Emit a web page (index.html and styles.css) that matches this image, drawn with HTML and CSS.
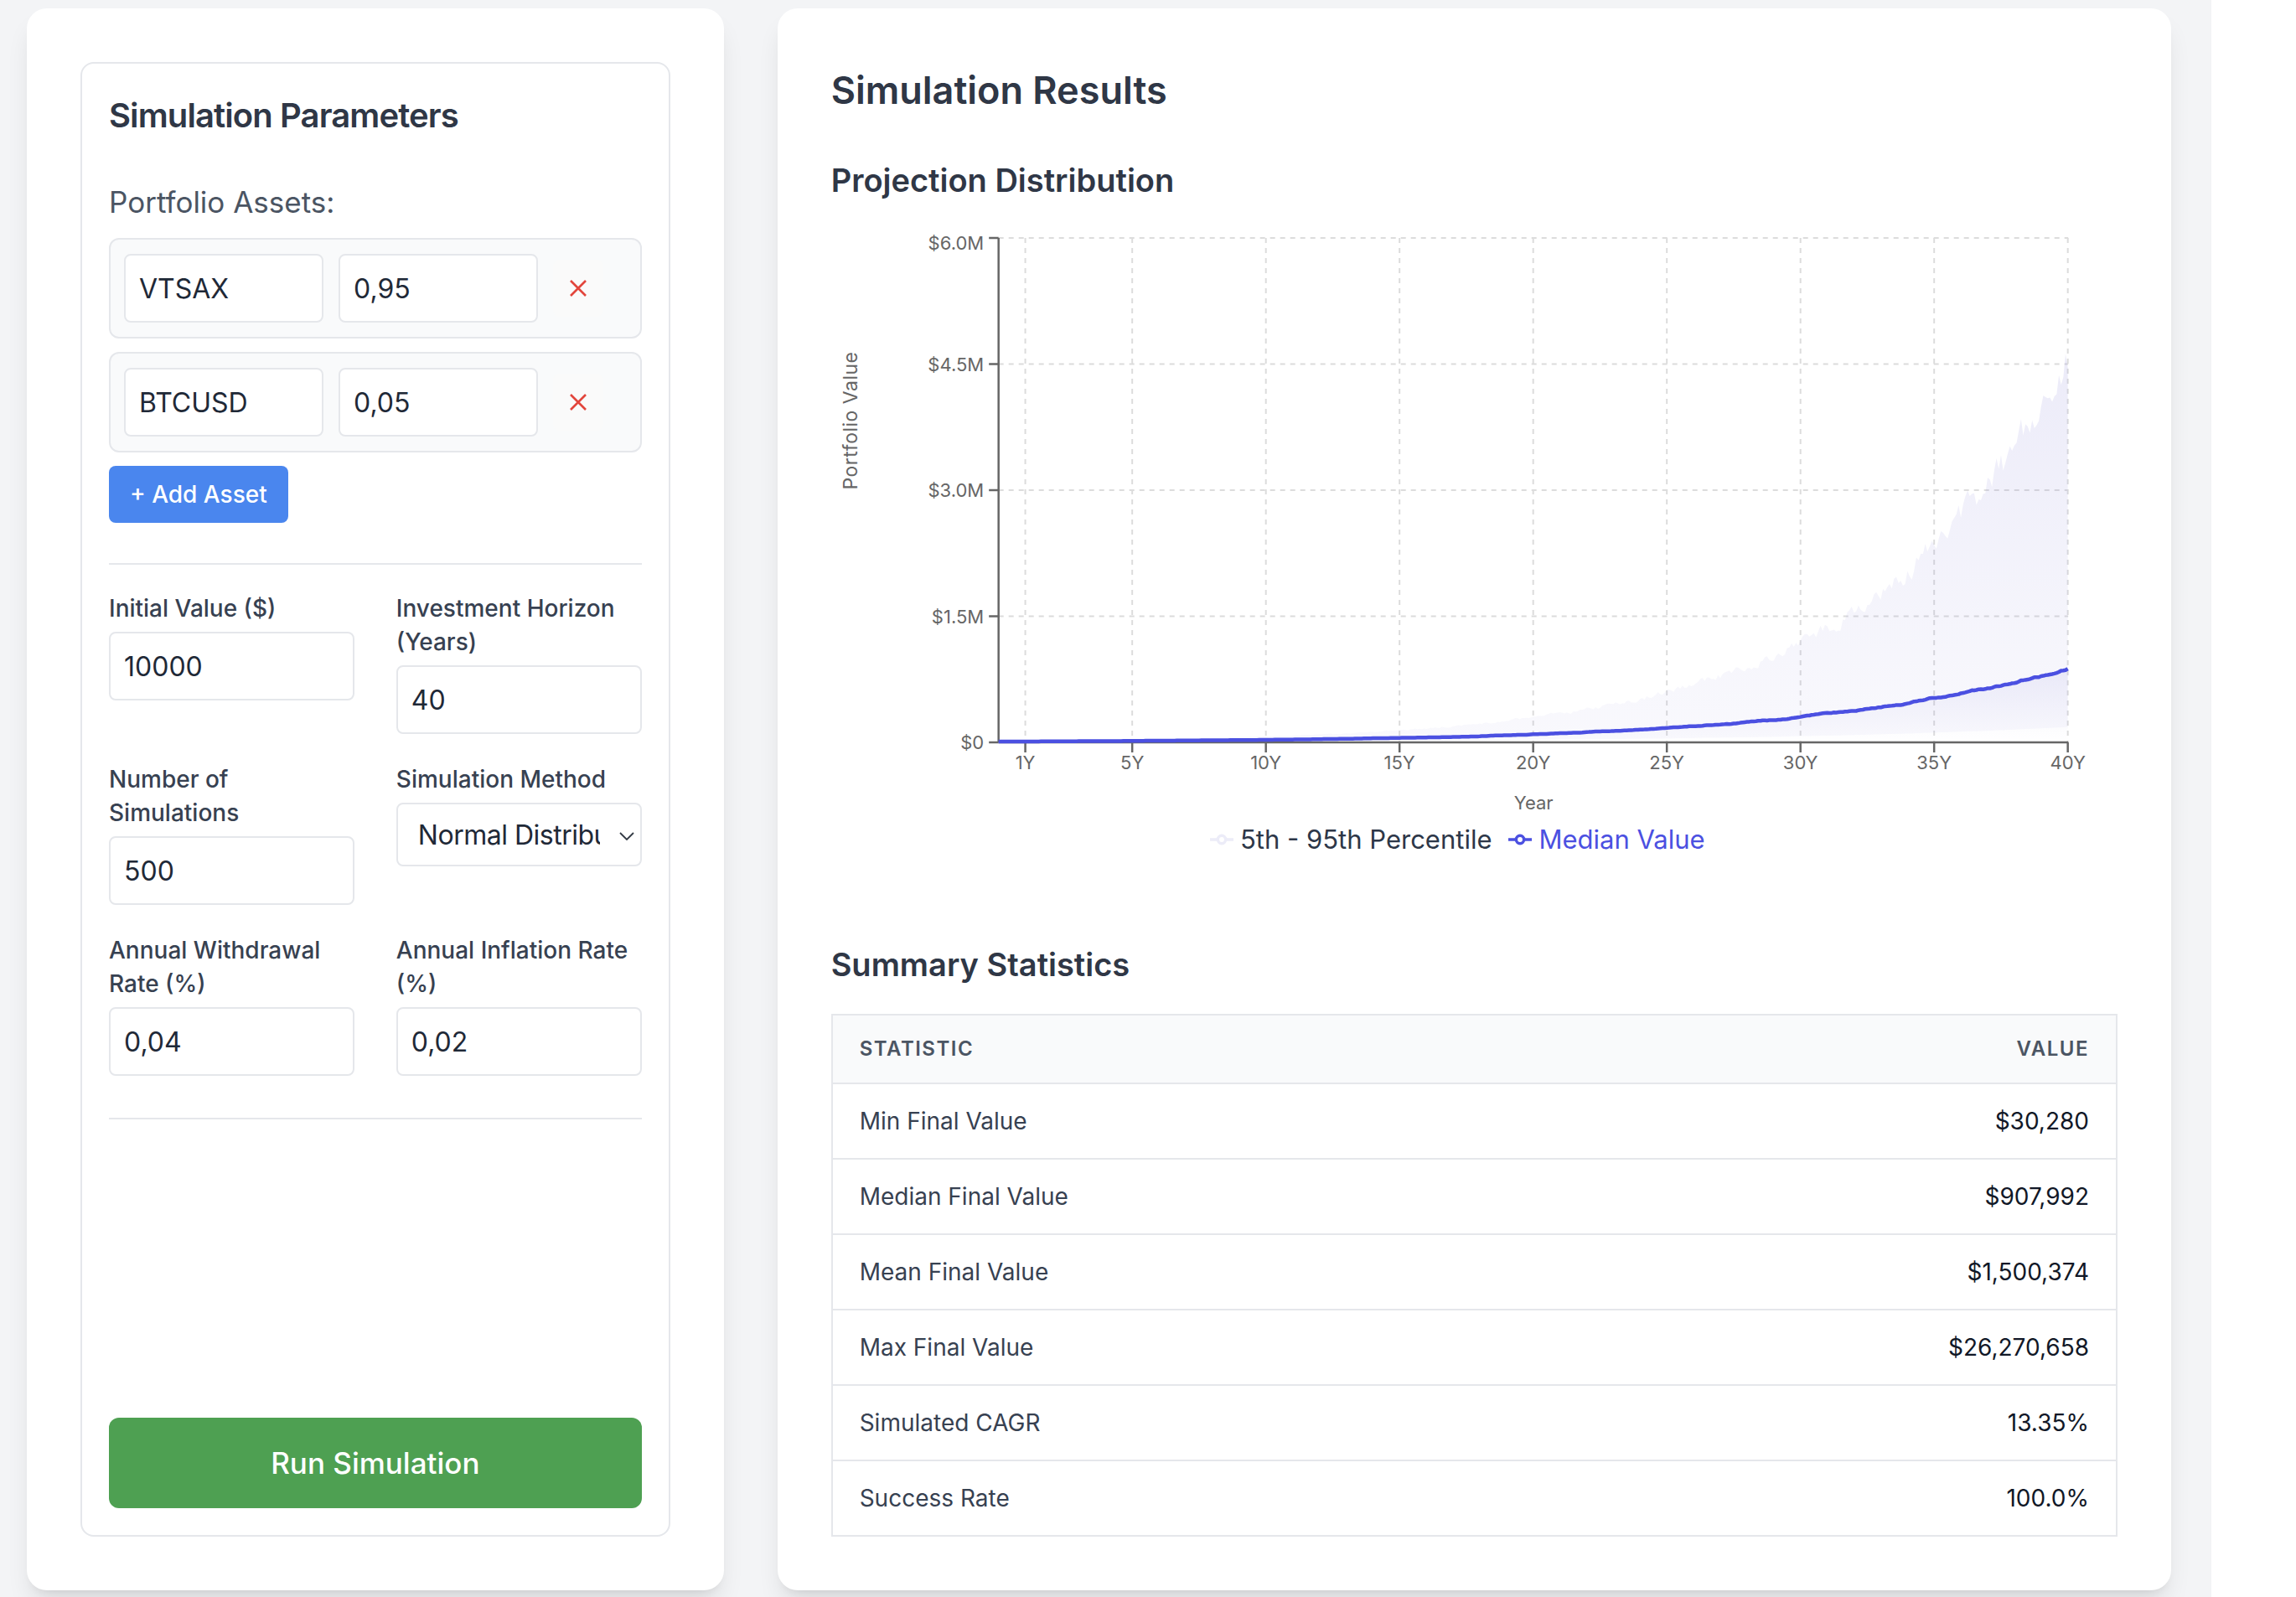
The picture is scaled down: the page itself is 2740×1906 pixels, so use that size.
FILE: index.html
```html
<!DOCTYPE html>
<html lang="en">
<head>
<meta charset="utf-8">
<title>Monte Carlo Simulation</title>
<link rel="stylesheet" href="styles.css">
</head>
<body>
<div class="page">
  <div class="layout">
    <section class="card card-left">
      <div class="params">
        <h2 class="params-title">Simulation Parameters</h2>
        <h3 class="assets-title">Portfolio Assets:</h3>
        <div class="asset-row">
          <input class="field-input asset-input" type="text" value="VTSAX">
          <input class="field-input asset-input" type="text" value="0,95">
          <button class="remove-btn" type="button" aria-label="Remove">
            <svg class="remove-icon" viewBox="0 0 22 22"><path d="M2 2L20 20M20 2L2 20"/></svg>
          </button>
        </div>
        <div class="asset-row">
          <input class="field-input asset-input" type="text" value="BTCUSD">
          <input class="field-input asset-input" type="text" value="0,05">
          <button class="remove-btn" type="button" aria-label="Remove">
            <svg class="remove-icon" viewBox="0 0 22 22"><path d="M2 2L20 20M20 2L2 20"/></svg>
          </button>
        </div>
        <button class="btn-add" type="button">+ Add Asset</button>
        <hr class="divider">
        <div class="fields">
          <div class="field">
            <label class="field-label">Initial Value ($)</label>
            <input class="field-input" type="text" value="10000">
          </div>
          <div class="field">
            <label class="field-label">Investment Horizon (Years)</label>
            <input class="field-input" type="text" value="40">
          </div>
          <div class="field">
            <label class="field-label">Number of Simulations</label>
            <input class="field-input" type="text" value="500">
          </div>
          <div class="field">
            <label class="field-label">Simulation Method</label>
            <div class="select-box">
              <span class="select-text">Normal Distribution</span>
              <svg class="select-chevron" viewBox="0 0 18 10"><path d="M1 1L9 9L17 1"/></svg>
            </div>
          </div>
          <div class="field">
            <label class="field-label">Annual Withdrawal Rate (%)</label>
            <input class="field-input" type="text" value="0,04">
          </div>
          <div class="field">
            <label class="field-label">Annual Inflation Rate (%)</label>
            <input class="field-input" type="text" value="0,02">
          </div>
        </div>
        <hr class="divider divider-bottom">
        <button class="btn-run" type="button">Run Simulation</button>
      </div>
    </section>

    <section class="card card-right">
      <h2 class="results-title">Simulation Results</h2>
      <h3 class="section-title">Projection Distribution</h3>
      <div class="chart">
        <svg class="chart-svg" viewBox="0 0 1535 718" width="1535" height="718">
          <defs>
            <linearGradient id="bandFill" x1="0" y1="0" x2="0" y2="1">
              <stop offset="0" stop-color="#8884d8" stop-opacity="0.16"/>
              <stop offset="1" stop-color="#8884d8" stop-opacity="0.05"/>
            </linearGradient>
            <linearGradient id="medFill" x1="0" y1="0" x2="0" y2="1">
              <stop offset="0" stop-color="#8884d8" stop-opacity="0.12"/>
              <stop offset="1" stop-color="#8884d8" stop-opacity="0"/>
            </linearGradient>
          </defs>
          <g class="grid">
            <line x1="199.5" y1="24" x2="1476" y2="24"/>
            <line x1="199.5" y1="174.5" x2="1476" y2="174.5"/>
            <line x1="199.5" y1="325" x2="1476" y2="325"/>
            <line x1="199.5" y1="475.5" x2="1476" y2="475.5"/>
            <line x1="231.4" y1="24" x2="231.4" y2="626"/>
            <line x1="359" y1="24" x2="359" y2="626"/>
            <line x1="518.5" y1="24" x2="518.5" y2="626"/>
            <line x1="678" y1="24" x2="678" y2="626"/>
            <line x1="837.5" y1="24" x2="837.5" y2="626"/>
            <line x1="997" y1="24" x2="997" y2="626"/>
            <line x1="1156.5" y1="24" x2="1156.5" y2="626"/>
            <line x1="1316" y1="24" x2="1316" y2="626"/>
            <line x1="1475.5" y1="24" x2="1475.5" y2="626"/>
          </g>
          <path id="band" class="band" d=""/>
          <path id="median-area" class="median-area" d=""/>
          <g class="axis">
            <line x1="199.5" y1="24" x2="199.5" y2="626"/>
            <line x1="199.5" y1="626" x2="1476" y2="626"/>
            <line x1="188" y1="24" x2="199.5" y2="24"/>
            <line x1="188" y1="174.5" x2="199.5" y2="174.5"/>
            <line x1="188" y1="325" x2="199.5" y2="325"/>
            <line x1="188" y1="475.5" x2="199.5" y2="475.5"/>
            <line x1="188" y1="626" x2="199.5" y2="626"/>
            <line x1="231.4" y1="626" x2="231.4" y2="638"/>
            <line x1="359" y1="626" x2="359" y2="638"/>
            <line x1="518.5" y1="626" x2="518.5" y2="638"/>
            <line x1="678" y1="626" x2="678" y2="638"/>
            <line x1="837.5" y1="626" x2="837.5" y2="638"/>
            <line x1="997" y1="626" x2="997" y2="638"/>
            <line x1="1156.5" y1="626" x2="1156.5" y2="638"/>
            <line x1="1316" y1="626" x2="1316" y2="638"/>
            <line x1="1475.5" y1="626" x2="1475.5" y2="638"/>
          </g>
          <path id="median-line" class="median-line" d=""/>
          <g class="tick-y">
            <text x="182" y="38">$6.0M</text>
            <text x="182" y="182.5">$4.5M</text>
            <text x="182" y="333">$3.0M</text>
            <text x="182" y="483.5">$1.5M</text>
            <text x="182" y="634">$0</text>
          </g>
          <g class="tick-x">
            <text x="231.4" y="658">1Y</text>
            <text x="359" y="658">5Y</text>
            <text x="518.5" y="658">10Y</text>
            <text x="678" y="658">15Y</text>
            <text x="837.5" y="658">20Y</text>
            <text x="997" y="658">25Y</text>
            <text x="1156.5" y="658">30Y</text>
            <text x="1316" y="658">35Y</text>
            <text x="1475.5" y="658">40Y</text>
          </g>
          <text class="axis-title" x="838" y="706">Year</text>
          <text class="axis-title axis-title-y" transform="translate(31 242) rotate(-90)">Portfolio Value</text>
        </svg>
        <div class="legend">
          <span class="legend-item">
            <svg class="legend-icon" viewBox="0 0 32 32"><path class="legend-band" d="M0,16h10.667A5.333,5.333,0,1,1,21.333,16H32M21.333,16A5.333,5.333,0,1,1,10.667,16"/></svg>
            <span class="legend-text">5th - 95th Percentile</span>
          </span>
          <span class="legend-item">
            <svg class="legend-icon" viewBox="0 0 32 32"><path class="legend-median" d="M0,16h10.667A5.333,5.333,0,1,1,21.333,16H32M21.333,16A5.333,5.333,0,1,1,10.667,16"/></svg>
            <span class="legend-text legend-text-median">Median Value</span>
          </span>
        </div>
      </div>
      <h3 class="section-title summary-title">Summary Statistics</h3>
      <table class="stats">
        <thead>
          <tr><th>Statistic</th><th class="num">Value</th></tr>
        </thead>
        <tbody>
          <tr><td>Min Final Value</td><td class="num">$30,280</td></tr>
          <tr><td>Median Final Value</td><td class="num">$907,992</td></tr>
          <tr><td>Mean Final Value</td><td class="num">$1,500,374</td></tr>
          <tr><td>Max Final Value</td><td class="num">$26,270,658</td></tr>
          <tr><td>Simulated CAGR</td><td class="num">13.35%</td></tr>
          <tr><td>Success Rate</td><td class="num">100.0%</td></tr>
        </tbody>
      </table>
    </section>
  </div>
</div>
<script src="chart.js"></script>
</body>
</html>
```

FILE: styles.css
```css
* { box-sizing: border-box; }

html, body {
  margin: 0;
  padding: 0;
  background: #ffffff;
}

body {
  font-family: "Inter", "Liberation Sans", sans-serif;
  color: #1f2937;
}

.page {
  width: 2639px;
  min-height: 1906px;
  background: #f3f4f6;
  padding: 10px 48px 10px 32px;
}

.layout {
  display: grid;
  grid-template-columns: minmax(0, 1fr) minmax(0, 2fr);
  column-gap: 64px;
  align-items: stretch;
}

.card {
  background: #ffffff;
  border-radius: 24px;
  padding: 64px;
  box-shadow: 0 20px 30px -6px rgba(0, 0, 0, 0.1), 0 8px 12px -8px rgba(0, 0, 0, 0.1);
}

.card-left {
  min-width: 0;
  display: flex;
  flex-direction: column;
}

.card-right {
  min-width: 0;
}

/* ---------- parameters ---------- */
.params {
  flex: 1;
  display: flex;
  flex-direction: column;
  border: 2px solid #e5e7eb;
  border-radius: 16px;
  padding: 32px;
}

.params-title {
  margin: 0 0 45px;
  font-size: 40px;
  line-height: 60px;
  font-weight: 600;
  letter-spacing: -0.9px;
  color: #2f3746;
}

.assets-title {
  margin: 0 0 15px;
  font-size: 35px;
  line-height: 56px;
  font-weight: 400;
  color: #4b5563;
}

.asset-row {
  display: flex;
  align-items: center;
  gap: 18px;
  padding: 17px 16px;
  margin-bottom: 16px;
  background: #f9fafb;
  border: 2px solid #e5e7eb;
  border-radius: 12px;
}

.field-input {
  display: block;
  width: 100%;
  height: 82px;
  margin: 0;
  padding: 0 16px;
  border: 2px solid #e5e7eb;
  border-radius: 8px;
  background: #ffffff;
  font-family: "Inter", "Liberation Sans", sans-serif;
  font-size: 32px;
  font-weight: 400;
  color: #1f2937;
  outline: none;
}

.asset-input {
  flex: none;
  width: 238px;
}

.remove-btn {
  flex: none;
  width: 60px;
  height: 68px;
  padding: 0;
  border: none;
  border-radius: 8px;
  background: #fafafa;
  display: flex;
  align-items: center;
  justify-content: center;
}

.remove-icon {
  width: 22px;
  height: 22px;
  fill: none;
  stroke: #e2453c;
  stroke-width: 2.6;
}

.btn-add {
  align-self: flex-start;
  height: 68px;
  padding: 0 25px;
  border: none;
  border-radius: 8px;
  background: #4a86ee;
  color: #ffffff;
  font-family: "Inter", "Liberation Sans", sans-serif;
  font-size: 28px;
  font-weight: 500;
}

.divider {
  height: 0;
  margin: 48px 0 32px;
  border: 0;
  border-top: 2px solid #e5e7eb;
}

.divider-bottom {
  margin: 50px 0 0;
}

.fields {
  display: grid;
  grid-template-columns: minmax(0, 1fr) minmax(0, 1fr);
  column-gap: 50px;
  row-gap: 34px;
  align-items: start;
}

.field-label {
  display: block;
  margin-bottom: 8px;
  font-size: 28px;
  line-height: 40px;
  font-weight: 500;
  color: #374151;
}

.select-box {
  position: relative;
  height: 76px;
  padding: 0 48px 0 24px;
  border: 2px solid #e5e7eb;
  border-radius: 8px;
  background: #ffffff;
  display: flex;
  align-items: center;
  overflow: hidden;
  white-space: nowrap;
  font-size: 32px;
  color: #1f2937;
}

.select-text {
  overflow: hidden;
  letter-spacing: -0.5px;
}

.select-chevron {
  position: absolute;
  right: 7px;
  top: 33px;
  width: 18px;
  height: 10px;
  fill: none;
  stroke: #333a44;
  stroke-width: 1.8;
}

.btn-run {
  margin-top: auto;
  width: 100%;
  height: 108px;
  border: none;
  border-radius: 12px;
  background: #4ea052;
  color: #ffffff;
  font-family: "Inter", "Liberation Sans", sans-serif;
  font-size: 35px;
  font-weight: 500;
}

/* ---------- results ---------- */
.results-title {
  margin: 0 0 49px;
  font-size: 45px;
  line-height: 68px;
  font-weight: 600;
  color: #2f3746;
}

.section-title {
  margin: 0 0 21px;
  font-size: 38px;
  line-height: 48px;
  font-weight: 600;
  color: #2f3746;
}

.summary-title {
  margin: 101px 0 35px;
}

.chart-svg {
  display: block;
  width: 100%;
  height: 718px;
  overflow: visible;
}

.grid line {
  stroke: #dcdcdc;
  stroke-width: 2;
  stroke-dasharray: 6 6;
}

.band {
  fill: url(#bandFill);
  stroke: none;
}

.median-area {
  fill: url(#medFill);
  stroke: none;
}

.axis line {
  stroke: #666666;
  stroke-width: 2.5;
}

.median-line {
  fill: none;
  stroke: #4b50e1;
  stroke-width: 4.5;
  stroke-linejoin: round;
}

.tick-y text,
.tick-x text,
.axis-title {
  font-family: "Inter", "Liberation Sans", sans-serif;
  font-size: 22px;
  fill: #666666;
}

.tick-y text {
  text-anchor: end;
}

.tick-x text,
.axis-title {
  text-anchor: middle;
}

.axis-title-y {
  font-size: 23px;
  letter-spacing: 0.5px;
}

.legend {
  display: flex;
  justify-content: center;
  padding-right: 20px;
  font-size: 31px;
  line-height: 48px;
}

.legend-item {
  display: inline-flex;
  align-items: center;
  margin-right: 20px;
}

.legend-icon {
  width: 28px;
  height: 28px;
  margin-right: 8px;
}

.legend-icon path {
  fill: none;
  stroke-width: 4;
}

.legend-band {
  stroke: #ececf8;
}

.legend-median {
  stroke: #4b50e1;
}

.legend-text {
  color: #2d3748;
}

.legend-text-median {
  color: #4b50e1;
}

/* ---------- table ---------- */
.stats {
  width: 100%;
  border-collapse: collapse;
  border: 2px solid #e5e7eb;
}

.stats th {
  padding: 24px 32px;
  background: #f9fafb;
  text-align: left;
  font-size: 24px;
  line-height: 32px;
  font-weight: 600;
  letter-spacing: 1.5px;
  text-transform: uppercase;
  color: #4b5563;
  border-bottom: 2px solid #e5e7eb;
}

.stats td {
  padding: 24px 32px;
  font-size: 28px;
  line-height: 40px;
  color: #374151;
  border-top: 2px solid #e5e7eb;
}

.stats .num {
  text-align: right;
}

.stats td.num {
  color: #111827;
}
```

FILE: chart.js
```js
(function () {
  var X0 = 199.5, XS = 31.9, Y0 = 626, YS = 602 / 6e6;
  var seed = 20240611;
  function rnd() {
    seed = (seed * 16807) % 2147483647;
    return (seed - 1) / 2147483646;
  }
  function px(t) { return X0 + XS * t; }
  function py(v) { return Y0 - v * YS; }

  var N = 480, up = [], med = [], lo = [];
  var nm = 0, nu = 0;
  for (var i = 0; i <= N; i++) {
    var t = i / 12;
    nm = 0.97 * nm + 0.012 * (rnd() * 2 - 1);
    nu = 0.6 * nu + 0.05 * (rnd() * 2 - 1);
    var base = 10000 * Math.exp(0.1128 * t);
    var s = 0.254 * Math.sqrt(t);
    med.push([px(t), py(base * (1 + nm))]);
    up.push([px(t), py(base * Math.exp(s) * (1 + nu))]);
    lo.push([px(t), py(base * Math.exp(-s) * (1 + nu * 0.2))]);
  }
  function pts(a) {
    return a.map(function (p) { return p[0].toFixed(1) + ',' + p[1].toFixed(1); });
  }
  var band = 'M' + pts(up).join('L') + 'L' + pts(lo.slice().reverse()).join('L') + 'Z';
  var line = 'M' + pts(med).join('L');
  var area = line + 'L' + px(40).toFixed(1) + ',' + Y0 + 'L' + X0 + ',' + Y0 + 'Z';
  document.getElementById('band').setAttribute('d', band);
  document.getElementById('median-area').setAttribute('d', area);
  document.getElementById('median-line').setAttribute('d', line);
})();
```
